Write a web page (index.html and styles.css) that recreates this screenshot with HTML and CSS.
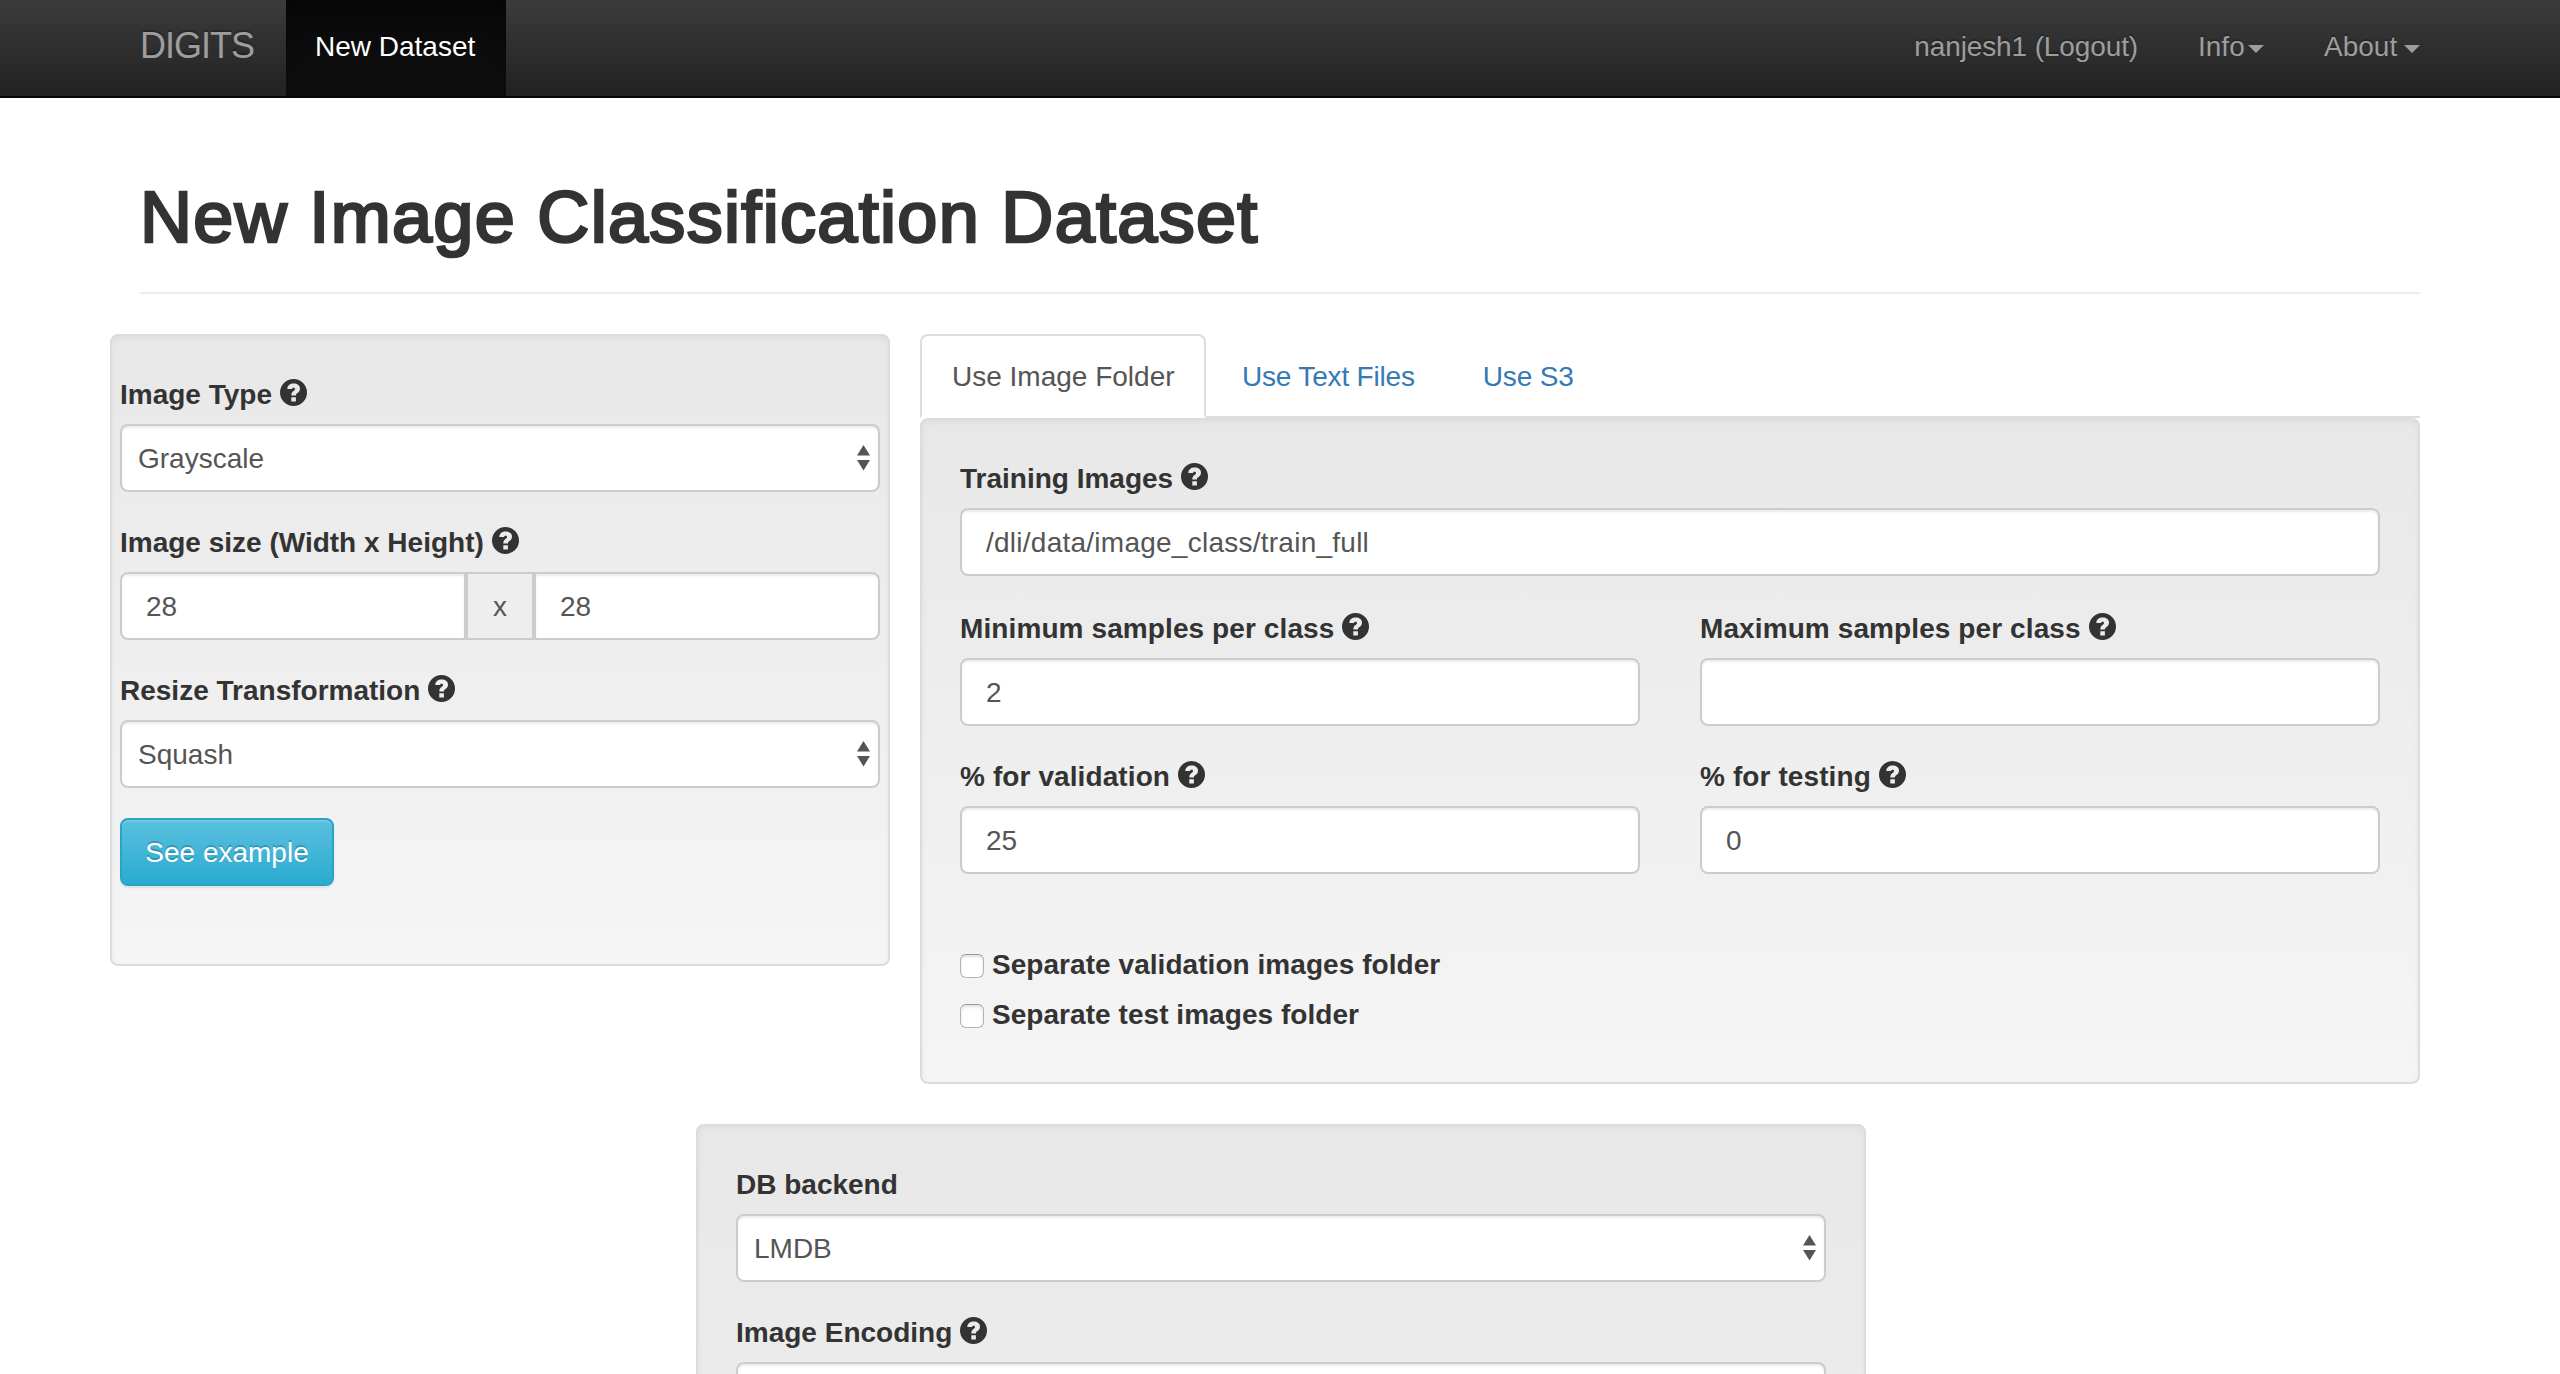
FILE: index.html
```html
<!DOCTYPE html>
<html lang="en">
<head>
<meta charset="utf-8">
<title>DIGITS - New Image Classification Dataset</title>
<link rel="stylesheet" href="styles.css">
</head>
<body>
<svg width="0" height="0" class="defs">
  <symbol id="help" viewBox="0 0 27 27">
    <path fill-rule="evenodd" fill="#333" d="M13.5 0a13.5 13.5 0 1 1 0 27a13.5 13.5 0 1 1 0-27zM7.3 9.9C7.3 6.4 10 4.4 13.7 4.4C17.3 4.4 20 6.4 20 9.4C20 12 18.6 13.2 17.2 14.2C16.2 15 15.9 15.4 15.9 16.4H11.3C11.3 13.9 12.1 12.9 13.5 11.9C14.6 11.1 15 10.6 15 9.9C15 9.2 14.5 8.7 13.6 8.7C12.6 8.7 12.1 9.2 12.1 9.9zM11.3 18.2H15.9V22.6H11.3z"/>
  </symbol>
  <symbol id="updown" viewBox="0 0 13 26">
    <path fill="#555" d="M6.5 0L13 10.5H0zM0 15H13L6.5 25.5z"/>
  </symbol>
</svg>
<nav class="navbar">
  <div class="container nav-row">
    <a class="brand">DIGITS</a>
    <a class="nav-item active">New Dataset</a>
    <div class="nav-right">
      <a class="nav-item user">nanjesh1 (Logout)</a>
      <a class="nav-item info">Info<span class="caret"></span></a>
      <a class="nav-item about">About<span class="caret"></span></a>
    </div>
  </div>
</nav>
<main class="container">
  <h1 class="page-header">New Image Classification Dataset</h1>
  <div class="columns">
    <section class="well well-left">
      <label class="label">Image Type <svg class="help"><use href="#help"/></svg></label>
      <div class="control select">Grayscale<svg class="updown"><use href="#updown"/></svg></div>
      <label class="label">Image size (Width x Height) <svg class="help"><use href="#help"/></svg></label>
      <div class="input-group">
        <div class="control">28</div>
        <div class="addon">x</div>
        <div class="control">28</div>
      </div>
      <label class="label">Resize Transformation <svg class="help"><use href="#help"/></svg></label>
      <div class="control select">Squash<svg class="updown"><use href="#updown"/></svg></div>
      <button class="btn">See example</button>
    </section>
    <section class="right">
      <div class="tabs">
        <a class="tab active">Use Image Folder</a>
        <a class="tab">Use Text Files</a>
        <a class="tab">Use S3</a>
      </div>
      <div class="well well-right">
        <label class="label">Training Images <svg class="help"><use href="#help"/></svg></label>
        <div class="control path">/dli/data/image_class/train_full</div>
        <div class="grid">
          <div>
            <label class="label">Minimum samples per class <svg class="help"><use href="#help"/></svg></label>
            <div class="control">2</div>
          </div>
          <div>
            <label class="label">Maximum samples per class <svg class="help"><use href="#help"/></svg></label>
            <div class="control"></div>
          </div>
          <div>
            <label class="label">% for validation <svg class="help"><use href="#help"/></svg></label>
            <div class="control">25</div>
          </div>
          <div>
            <label class="label">% for testing <svg class="help"><use href="#help"/></svg></label>
            <div class="control">0</div>
          </div>
        </div>
        <label class="check"><span class="box"></span>Separate validation images folder</label>
        <label class="check"><span class="box"></span>Separate test images folder</label>
      </div>
    </section>
  </div>
  <section class="well well-bottom">
    <label class="label">DB backend</label>
    <div class="control select">LMDB<svg class="updown"><use href="#updown"/></svg></div>
    <label class="label">Image Encoding <svg class="help"><use href="#help"/></svg></label>
    <div class="control select"></div>
  </section>
</main>
</body>
</html>
```
FILE: styles.css
```css
* { box-sizing: border-box; }
html, body { height: 1374px; overflow: hidden; }
body {
  margin: 0;
  background: #fff;
  color: #333;
  font: 28px/40px "Liberation Sans", Arial, sans-serif;
}
.defs { display: block; }
.container { width: 2340px; margin: 0 auto; }

.navbar {
  height: 98px;
  border-bottom: 2px solid #080808;
  background: linear-gradient(#3b3b3b, #222);
}
.nav-row { display: flex; height: 96px; padding-left: 30px; }
.brand {
  width: 146px;
  padding-top: 26px;
  font-size: 36px;
  letter-spacing: -1px;
  color: #9d9d9d;
  text-shadow: 0 -2px 0 rgba(0, 0, 0, .25);
}
.nav-item {
  padding: 27px 30px 0;
  color: #9d9d9d;
  white-space: nowrap;
  text-shadow: 0 -2px 0 rgba(0, 0, 0, .25);
}
.nav-item.active {
  width: 220px;
  padding-left: 29px;
  color: #fff;
  background: linear-gradient(#080808, #0f0f0f);
  box-shadow: inset 0 2px 18px rgba(0, 0, 0, .25);
}
.nav-right { display: flex; margin-left: auto; }
.user { letter-spacing: -.12px; }
.info { width: 156px; margin-right: 0; }
.info { width: 126px; }
.about { width: 156px; }
.caret {
  display: inline-block;
  margin-left: 4px;
  vertical-align: middle;
  border-top: 8px solid;
  border-left: 8px solid transparent;
  border-right: 8px solid transparent;
}
.info .caret { margin-left: 3px; }
.about .caret { margin-left: 6.5px; }

/* Medium weight: regular glyphs thickened by a stroke */
.page-header {
  height: 196px;
  margin: 0 30px 40px;
  padding-top: 80px;
  border-bottom: 2px solid #eee;
  font-size: 72px;
  line-height: 79px;
  font-weight: normal;
  letter-spacing: 1.32px;
  -webkit-text-stroke: 2.7px #333;
}

.columns { display: flex; gap: 30px; align-items: flex-start; }
.well {
  border: 2px solid #dcdcdc;
  border-radius: 8px;
  background: linear-gradient(#e8e8e8, #f5f5f5);
  box-shadow: inset 0 2px 6px rgba(0, 0, 0, .05), 0 2px 0 rgba(255, 255, 255, .1);
}
.well-left { width: 780px; height: 632px; padding: 38px 8px; }
.well-right { height: 666px; padding: 38px; }
.well-bottom { width: 1170px; height: 940px; margin: 40px 0 0 586px; padding: 38px; }
.right { width: 1500px; }

.label { display: flex; gap: 8px; height: 40px; margin-bottom: 10px; padding-top: 1px; font-weight: bold; }
.grid .label { letter-spacing: .1px; }
.help { width: 27px; height: 27px; margin-top: 3.5px; }
.control {
  height: 68px;
  margin-bottom: 30px;
  padding: 13px 24px 0;
  border: 2px solid #ccc;
  border-radius: 8px;
  background: #fff;
  color: #555;
  box-shadow: inset 0 2px 2px rgba(0, 0, 0, .075);
}
.select { display: flex; justify-content: space-between; padding: 13px 8px 0 16px; }
.updown { width: 13px; height: 26px; margin-top: 6px; }
.input-group { display: flex; }
.input-group .control { width: 346px; }
.input-group .control:first-child { border-radius: 8px 0 0 8px; }
.input-group .control:last-child { border-radius: 0 8px 8px 0; }
.addon {
  width: 68px;
  height: 68px;
  padding-top: 13px;
  border: 2px solid #ccc;
  background: #eee;
  color: #555;
  text-align: center;
}
.btn {
  display: block;
  width: 214px;
  height: 68px;
  padding: 2px 0 0;
  border: 2px solid #28a4c9;
  border-radius: 8px;
  background: linear-gradient(#5bc0de, #2aabd2);
  color: #fff;
  font: inherit;
  text-shadow: 0 -2px 0 rgba(0, 0, 0, .2);
  box-shadow: inset 0 2px 0 rgba(255, 255, 255, .15), 0 2px 2px rgba(0, 0, 0, .075);
}

.tabs { display: flex; gap: 4px; height: 84px; border-bottom: 2px solid #ddd; }
.tab {
  height: 84px;
  padding: 21px 30px 0;
  border: 2px solid transparent;
  color: #337ab7;
  letter-spacing: -.18px;
  white-space: nowrap;
}
.tab.active {
  width: 286px;
  border-color: #ddd #ddd #fff;
  border-radius: 8px 8px 0 0;
  background: #fff;
  color: #555;
  letter-spacing: 0;
}
.path { margin-bottom: 32px; letter-spacing: .25px; }
.grid { display: grid; grid-template-columns: 680px 680px; column-gap: 60px; margin-bottom: 40px; }
.check { display: flex; gap: 8px; height: 50px; padding-top: 1px; font-weight: bold; letter-spacing: .05px; }
.box {
  width: 24px;
  height: 24px;
  margin-top: 9px;
  border: 1.5px solid #b4b4b4;
  border-top-color: #999;
  border-radius: 6px;
  background: #fff;
  box-shadow: inset 0 2px 3px rgba(0, 0, 0, .12);
}
```
